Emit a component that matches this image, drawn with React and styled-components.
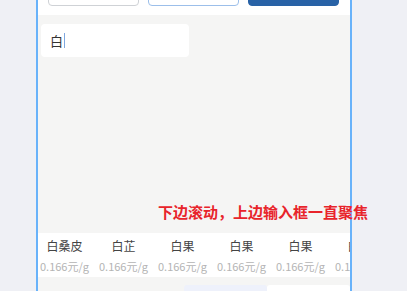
import React from 'react';
import styled, { createGlobalStyle } from 'styled-components';

const herbs = [
  { name: '白桑皮', price: '0.166元/g' },
  { name: '白芷', price: '0.166元/g' },
  { name: '白果', price: '0.166元/g' },
  { name: '白果', price: '0.166元/g' },
  { name: '白果', price: '0.166元/g' },
  { name: '白果', price: '0.166元/g' }
];

const App = () => (
  <Page>
    <GlobalStyle />
    <Frame>
      <TopBar>
        <ActionButton variant="plain" />
        <ActionButton variant="outline" />
        <ActionButton variant="primary" />
      </TopBar>
      <Content>
        <SearchBox>
          白
          <Caret />
        </SearchBox>
        <Hint>下边滚动，上边输入框一直聚焦</Hint>
        <HerbStrip>
          {herbs.map((herb, i) => (
            <HerbItem key={i}>
              <HerbName>{herb.name}</HerbName>
              <HerbPrice>{herb.price}</HerbPrice>
            </HerbItem>
          ))}
        </HerbStrip>
        <TabRow>
          <Tab active />
          <Tab />
        </TabRow>
      </Content>
    </Frame>
  </Page>
);

const GlobalStyle = createGlobalStyle`
  body {
    margin: 0;
    background: #eff0f5;
    font-family: "Noto Sans CJK SC", "Noto Sans", sans-serif;
  }
`;

const Page = styled.div`
  height: 291px;
  overflow: hidden;
`;

const Frame = styled.div`
  margin-left: 36px;
  width: 312px;
  height: 291px;
  border-left: 2px solid #68b2fa;
  border-right: 2px solid #68b2fa;
  background: #f5f5f4;
  display: flex;
  flex-direction: column;
`;

const TopBar = styled.div`
  height: 15px;
  flex-shrink: 0;
  background: #fff;
  display: flex;
  align-items: flex-end;
  gap: 9px;
  padding: 0 0 9px 10px;
  box-sizing: border-box;
  overflow: hidden;
`;

const ActionButton = styled.div`
  width: 91px;
  height: 30px;
  flex-shrink: 0;
  box-sizing: border-box;
  border-radius: 4px;
  border: 1px solid
    ${props =>
      props.variant === 'plain'
        ? '#cfd2d6'
        : props.variant === 'outline'
        ? '#9cbfea'
        : '#2862a6'};
  background: ${props => (props.variant === 'primary' ? '#2862a6' : '#fff')};
`;

const Content = styled.div`
  flex: 1;
  display: flex;
  flex-direction: column;
  padding-top: 9px;
`;

const SearchBox = styled.div`
  margin-left: 3px;
  width: 148px;
  height: 33px;
  box-sizing: border-box;
  border-radius: 4px;
  background: #fff;
  display: flex;
  align-items: center;
  padding-left: 9px;
  font-size: 13px;
  color: #333;
`;

const Caret = styled.span`
  display: inline-block;
  width: 1px;
  height: 15px;
  margin-left: 1px;
  background: #7fa8e0;
`;

const Hint = styled.div`
  margin: 146px 0 0 120px;
  white-space: nowrap;
  font-size: 15px;
  line-height: 18px;
  font-weight: 700;
  color: #e8242b;
`;

const HerbStrip = styled.div`
  margin-top: 12px;
  height: 44px;
  flex-shrink: 0;
  background: #fff;
  display: flex;
  overflow: hidden;
  padding-left: 0;
`;

const HerbItem = styled.div`
  width: 59px;
  flex-shrink: 0;
  display: flex;
  flex-direction: column;
  align-items: center;
  padding-top: 5px;
  gap: 5px;
  &:first-child {
    margin-left: -3px;
  }
`;

const HerbName = styled.div`
  font-size: 12px;
  line-height: 16px;
  color: #444;
  white-space: nowrap;
`;

const HerbPrice = styled.div`
  font-size: 11px;
  line-height: 14px;
  color: #b4b4b4;
  white-space: nowrap;
`;

const TabRow = styled.div`
  display: flex;
  margin-top: 8px;
  padding-left: 146px;
`;

const Tab = styled.div`
  width: ${props => (props.active ? '83px' : '83px')};
  height: 20px;
  border-radius: 3px 3px 0 0;
  background: ${props => (props.active ? '#eef1fb' : '#fff')};
`;

export default App;
